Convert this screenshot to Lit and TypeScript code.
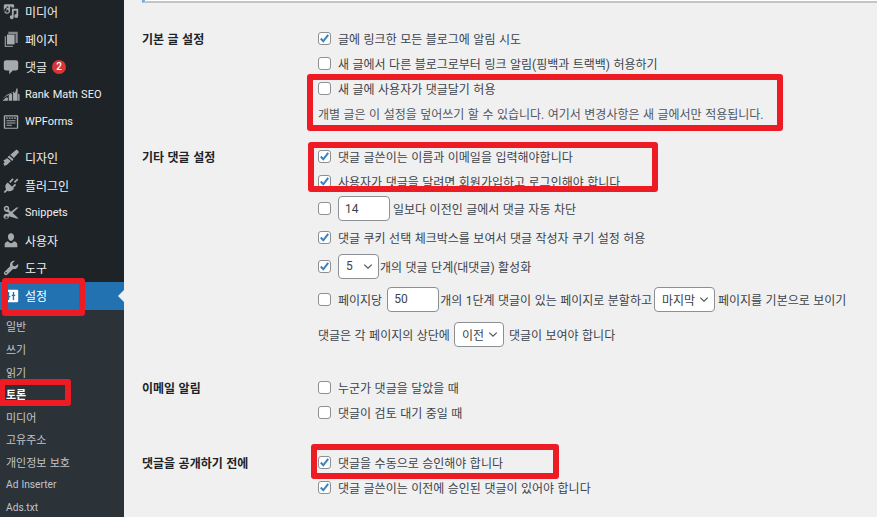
import { LitElement, html, css, svg } from "lit";
import { customElement } from "lit/decorators.js";

const icons: Record<string, unknown> = {
  media: svg`<path fill-rule="evenodd" d="M3.500 1.500h8.500a1.500 1.500 0 0 1 1.500 1.500v2h-3v-1H9v4.600a3.300 3.300 0 1 1-2-3V4H5v5.500H3.500A1.500 1.500 0 0 1 2 8V3a1.500 1.500 0 0 1 1.500-1.500zM5.800 7.500a1.600 1.600 0 1 0 0 3.200 1.600 1.600 0 0 0 0-3.200z"/><path d="M11 6.500h7v8a2.200 2.200 0 1 1-2-2.200V8.500h-3v7.300a2.200 2.200 0 1 1-2-2.200z"/>`,
  page: svg`<path d="M7 2h10.500v12.500H15V4.500H7z" opacity=".75"/><path d="M5.500 5h8.500v11H5.500z"/><path d="M3 7h1.500v10.500H12V19H3z" opacity=".8"/>`,
  comment: svg`<path d="M4.500 2.500h11A2.500 2.500 0 0 1 18 5v6.500a2.500 2.500 0 0 1-2.500 2.500H12l-4 4v-4H4.500A2.500 2.500 0 0 1 2 11.500V5a2.500 2.500 0 0 1 2.500-2.500z"/>`,
  rank: svg`<path d="M.500 17.500l4.500-4 1.500.9v3.100zM7.500 17.500v-6l2.500-2 1.300 1v7zM12.300 17.500V7.500L14.500 9l1.800-5.500 1 .5v13.500zM18 17.500v-8l1.500 1v7zM.500 15l5.500-4.500L14 7" />`,
  forms: svg`<path fill-rule="evenodd" d="M3 2.500h14a1 1 0 0 1 1 1v13a1 1 0 0 1-1 1H3a1 1 0 0 1-1-1v-13a1 1 0 0 1 1-1zM3.500 4v12.500h13V4zM4.500 5h2v1.500h-2zM7.500 5h2v1.500h-2zM10.500 5h2v1.500h-2zM13.500 5h2v1.500h-2zM5 8h10v1.200H5zM5 10.500h10v1.200H5zM5 13h6v1.200H5z"/>`,
  brush: svg`<path d="M18.400 2.500l-1.500-1.500c-.5-.4-1-.4-1.400 0L9.200 6.400l4 3.500 5.400-6c.3-.4.2-1-.2-1.400zM8 7.200L6.200 9l5.200 4.400 1.300-2zM5.500 10c-1 1.500-2 2-4 2.400L3 15l-1.500 1.200L2.800 19c2.500-1 4-2.400 6-4.500l1.200-1z"/>`,
  plugin: svg`<path d="M13.100 6.400l3.700-3.700 1.400 1.400-3.700 3.700zM11.500 2.500L13 4l-3.700 3.700-1.400-1.400zM14.400 8.500l1.400 1.400-3.700 3.700-1.400-1.400zM4.600 9l1.800-1.900 7 7-1.800 1.800c-1.800 1.400-4 1.500-5.500.5L3.200 19l-1.300-1.300 2.700-2.900C3.400 13 3.300 10.800 4.600 9z"/>`,
  scissors: svg`<path fill-rule="evenodd" d="M5 2a3 3 0 0 1 2.700 4.300L10 8.500 16 3.800h2.500L11.800 10l6.700 6.200H16L7.700 13.700A3 3 0 1 1 6 11.100l2.200-1.100L6 8.900A3 3 0 1 1 5 2zm0 1.700a1.300 1.300 0 1 0 0 2.600 1.300 1.300 0 0 0 0-2.600zm0 10a1.300 1.300 0 1 0 0 2.600 1.300 1.300 0 0 0 0-2.600z"/>`,
  user: svg`<path d="M10 2.500c2 0 3.400 1.700 3.400 3.800S12 11 10 11 6.600 8.400 6.600 6.300 8 2.500 10 2.500zM13.500 11.500c2 .8 3.500 1.800 3.500 3.500v3H3v-3c0-1.700 1.500-2.700 3.500-3.500 1 1.300 2.200 2 3.500 2s2.500-.7 3.500-2z"/>`,
  wrench: svg`<path d="M18 5.500c.300 1.700-.2 3.300-1.300 4.400-1.200 1.200-3 1.600-4.500 1.100L6 17.300c-.9.900-2.300.9-3.200 0s-.9-2.300 0-3.200L9 8c-.5-1.600-.1-3.300 1.100-4.600C11.300 2.300 12.900 1.800 14.500 2L11.500 5l.6 2.400 2.400.6zM4.500 14.500a.9.900 0 1 0 0 1.800.9.900 0 0 0 0-1.800z"/>`,
  settings: svg`<path fill-rule="evenodd" d="M3.500 3h13A1.500 1.500 0 0 1 18 4.500v11a1.500 1.500 0 0 1-1.500 1.500h-13A1.500 1.500 0 0 1 2 15.500v-11A1.500 1.500 0 0 1 3.500 3zM12 5.500v3h-1.200v1.500H12v4.500h1.500V10h1.200V8.500h-1.200v-3zM6.500 5.500V10H5.300v1.500h1.200v3H8v-3h1.200V10H8V5.500z"/>`,
};

const ic = (n: string) => html`<svg class="ic" viewBox="0 0 20 20" aria-hidden="true">${icons[n]}</svg>`;
const chev = html`<svg class="chev" viewBox="0 0 12 8" aria-hidden="true"><path d="M1.500 1.800 6 6l4.500-4.200"/></svg>`;
const box = (on: boolean) => html`<span class="cb ${on ? "on" : ""}">${on
  ? html`<svg viewBox="0 0 13 13" aria-hidden="true"><path d="M2.800 6.500 5.300 9.300 10.200 2.800"/></svg>`
  : ""}</span>`;
const sel = (t: string, cls: string) => html`<span class="sel ${cls}"><span>${t}</span>${chev}</span>`;
const inp = (t: string) => html`<span class="inp">${t}</span>`;
const isLatin = (t: string) => /^[A-Za-z. ]+$/.test(t);

@customElement("app-root")
export class AppRoot extends LitElement {
  static styles = css`
    :host { display: block; width: 877px; height: 517px; overflow: hidden; position: relative; background: #f0f0f1;
      font-family: Roboto, "Noto Sans CJK KR", sans-serif; font-size: 12px; word-spacing: .5px; color: #3c434a; }
    .page { display: flex; height: 517px; overflow: hidden; }
    .side { width: 124px; flex: none; background: #1d2327; color: #f0f0f1; margin-top: -2px; height: 519px; overflow: hidden; }
    .it { height: 27.5px; display: flex; align-items: center; gap: 5px; padding-left: 2px; position: relative; }
    .sep { height: 8.5px; }
    .ic { width: 18px; height: 18px; fill: #a7aaad; flex: none; }
    .lat { font-size: 11px; }
    .badge { width: 14px; height: 14px; border-radius: 50%; background: #d63638; color: #fff; font-size: 10px; font-weight: 500; display: flex;
      align-items: center; justify-content: center; }
    .active { background: #2271b1; color: #fff; margin-top: .5px; }
    .active .ic { fill: #fff; }
    .active::after { content: ""; position: absolute; right: 0; top: 8px; border: 6px solid transparent; border-right-color: #f0f0f1; border-left: 0; }
    .sub { background: #2c3338; padding-top: 5.700px; height: 220px; }
    .sub div { height: 22.6px; display: flex; align-items: center; padding-left: 6px; font-size: 11px; color: #c3c4c7; }
    .sub .lat { font-size: 10.2px; }
    .sub .cur { color: #fff; font-weight: 700; }
    .main { flex: 1; padding-left: 18px; position: relative; }
    .top { height: 3px; background: #fff; border-left: 3px solid #72aee6; border-bottom: 2px solid #c3c4c7; box-sizing: border-box; }
    .sec { display: flex; }
    .th { width: 175px; flex: none; color: #1d2327; font-weight: 600; line-height: 28px; }
    .td { display: flex; flex-direction: column; }
    .r { height: 25px; display: flex; align-items: center; white-space: nowrap; }
    .h28 { height: 28px; }
    .h29 { height: 29px; }
    .h30 { height: 30px; }
    .h35 { height: 35px; }
    .h36 { height: 36px; }
    .cb { width: 13px; height: 13px; box-sizing: border-box; border: 1px solid #8c8f94; border-radius: 3px; background: #fff; margin: 0 7px 0 1px; flex: none; display: block; }
    .cb svg { display: block; width: 13px; height: 13px; margin: -1px; fill: none; stroke: #3582c4; stroke-width: 2; }
    .inp, .sel { box-sizing: border-box; height: 25px; background: #fff; border: 1px solid #8c8f94; border-radius: 4px; display: inline-flex;
      align-items: center; flex: none; }
    .inp { width: 52px; padding-left: 6px; }
    .sel { justify-content: space-between; padding: 0 5px 0 7px; }
    .s5 { width: 41px; }
    .s3 { width: 61px; }
    .s2 { width: 50px; }
    .chev { width: 10px; height: 7px; fill: none; stroke: #50575e; stroke-width: 1.500; }
    .a1 { margin-left: 1px; }
    .a2 { margin-left: 2px; }
    .a3 { margin-left: 3px; }
    .a4 { margin-left: 4px; }
    .a5 { margin-left: 5px; }
    .gap1 { padding-top: 23px; }
    .gap2 { padding-top: 18px; }
    .gap3 { padding-top: 23px; }
    .gap4 { padding-top: 25px; }
    .desc { color: #50575e; padding-left: 1px; }
    .plain { padding-left: 1px; }
    .mark { position: absolute; box-sizing: border-box; border: 6px solid #ed1c24; border-radius: 3px; }
    .m1 { left: 307px; top: 74px; width: 476px; height: 57px; }
    .m2 { left: 308px; top: 142px; width: 350px; height: 50px; }
    .m3 { left: 2px; top: 278px; width: 83px; height: 38px; }
    .m4 { left: -1px; top: 379px; width: 72px; height: 27px; }
    .m5 { left: 311px; top: 444px; width: 248px; height: 35px; }
  `;

  render() {
    const nav: [string, string][] = [
      ["media", "미디어"], ["page", "페이지"], ["comment", "댓글"], ["rank", "Rank Math SEO"], ["forms", "WPForms"],
    ];
    const nav2: [string, string][] = [
      ["brush", "디자인"], ["plugin", "플러그인"], ["scissors", "Snippets"], ["user", "사용자"], ["wrench", "도구"],
    ];
    const subs = ["일반", "쓰기", "읽기", "토론", "미디어", "고유주소", "개인정보 보호", "Ad Inserter", "Ads.txt"];
    const label = (t: string) => html`<span class="${isLatin(t) ? "lat" : ""}">${t}</span>`;
    return html`
      <div class="page">
        <nav class="side">
          ${nav.map(([i, t]) => html`<div class="it">${ic(i)}${label(t)}${t === "댓글" ? html`<span class="badge">2</span>` : ""}</div>`)}
          <div class="sep"></div>
          ${nav2.map(([i, t]) => html`<div class="it">${ic(i)}${label(t)}</div>`)}
          <div class="it active">${ic("settings")}<span>설정</span></div>
          <div class="sub">${subs.map((s) => html`<div class="${s === "토론" ? "cur" : ""}">${label(s)}</div>`)}</div>
        </nav>
        <main class="main">
          <div class="top"></div>
          <section class="sec gap1">
            <div class="th">기본 글 설정</div>
            <div class="td">
              <div class="r">${box(true)}글에 링크한 모든 블로그에 알림 시도</div>
              <div class="r">${box(false)}새 글에서 다른 블로그로부터 링크 알림(핑백과 트랙백) 허용하기</div>
              <div class="r">${box(false)}새 글에 사용자가 댓글달기 허용</div>
              <div class="r desc">개별 글은 이 설정을 덮어쓰기 할 수 있습니다. 여기서 변경사항은 새 글에서만 적용됩니다.</div>
            </div>
          </section>
          <section class="sec gap2">
            <div class="th">기타 댓글 설정</div>
            <div class="td">
              <div class="r">${box(true)}댓글 글쓴이는 이름과 이메일을 입력해야합니다</div>
              <div class="r">${box(true)}사용자가 댓글을 달려면 회원가입하고 로그인해야 합니다</div>
              <div class="r h29">${box(false)}${inp("14")}<span class="a3">일보다 이전인 글에서 댓글 자동 차단</span></div>
              <div class="r h28">${box(true)}댓글 쿠키 선택 체크박스를 보여서 댓글 작성자 쿠기 설정 허용</div>
              <div class="r h30">${box(true)}${sel("5", "s5")}<span class="a1">개의 댓글 단계(대댓글) 활성화</span></div>
              <div class="r h36">${box(false)}페이지당<span class="a5"></span>${inp("50")}<span class="a1">개의 1단계 댓글이 있는 페이지로 분할하고</span><span class="a2"></span>${sel("마지막", "s3")}<span class="a3">페이지를 기본으로 보이기</span></div>
              <div class="r h35 plain">댓글은 각 페이지의 상단에<span class="a4"></span>${sel("이전", "s2")}<span class="a5">댓글이 보여야 합니다</span></div>
            </div>
          </section>
          <section class="sec gap3">
            <div class="th">이메일 알림</div>
            <div class="td">
              <div class="r">${box(false)}누군가 댓글을 달았을 때</div>
              <div class="r">${box(false)}댓글이 검토 대기 중일 때</div>
            </div>
          </section>
          <section class="sec gap4">
            <div class="th">댓글을 공개하기 전에</div>
            <div class="td">
              <div class="r">${box(true)}댓글을 수동으로 승인해야 합니다</div>
              <div class="r">${box(true)}댓글 글쓴이는 이전에 승인된 댓글이 있어야 합니다</div>
            </div>
          </section>
        </main>
      </div>
      <div class="mark m1"></div>
      <div class="mark m2"></div>
      <div class="mark m3"></div>
      <div class="mark m4"></div>
      <div class="mark m5"></div>
    `;
  }
}
